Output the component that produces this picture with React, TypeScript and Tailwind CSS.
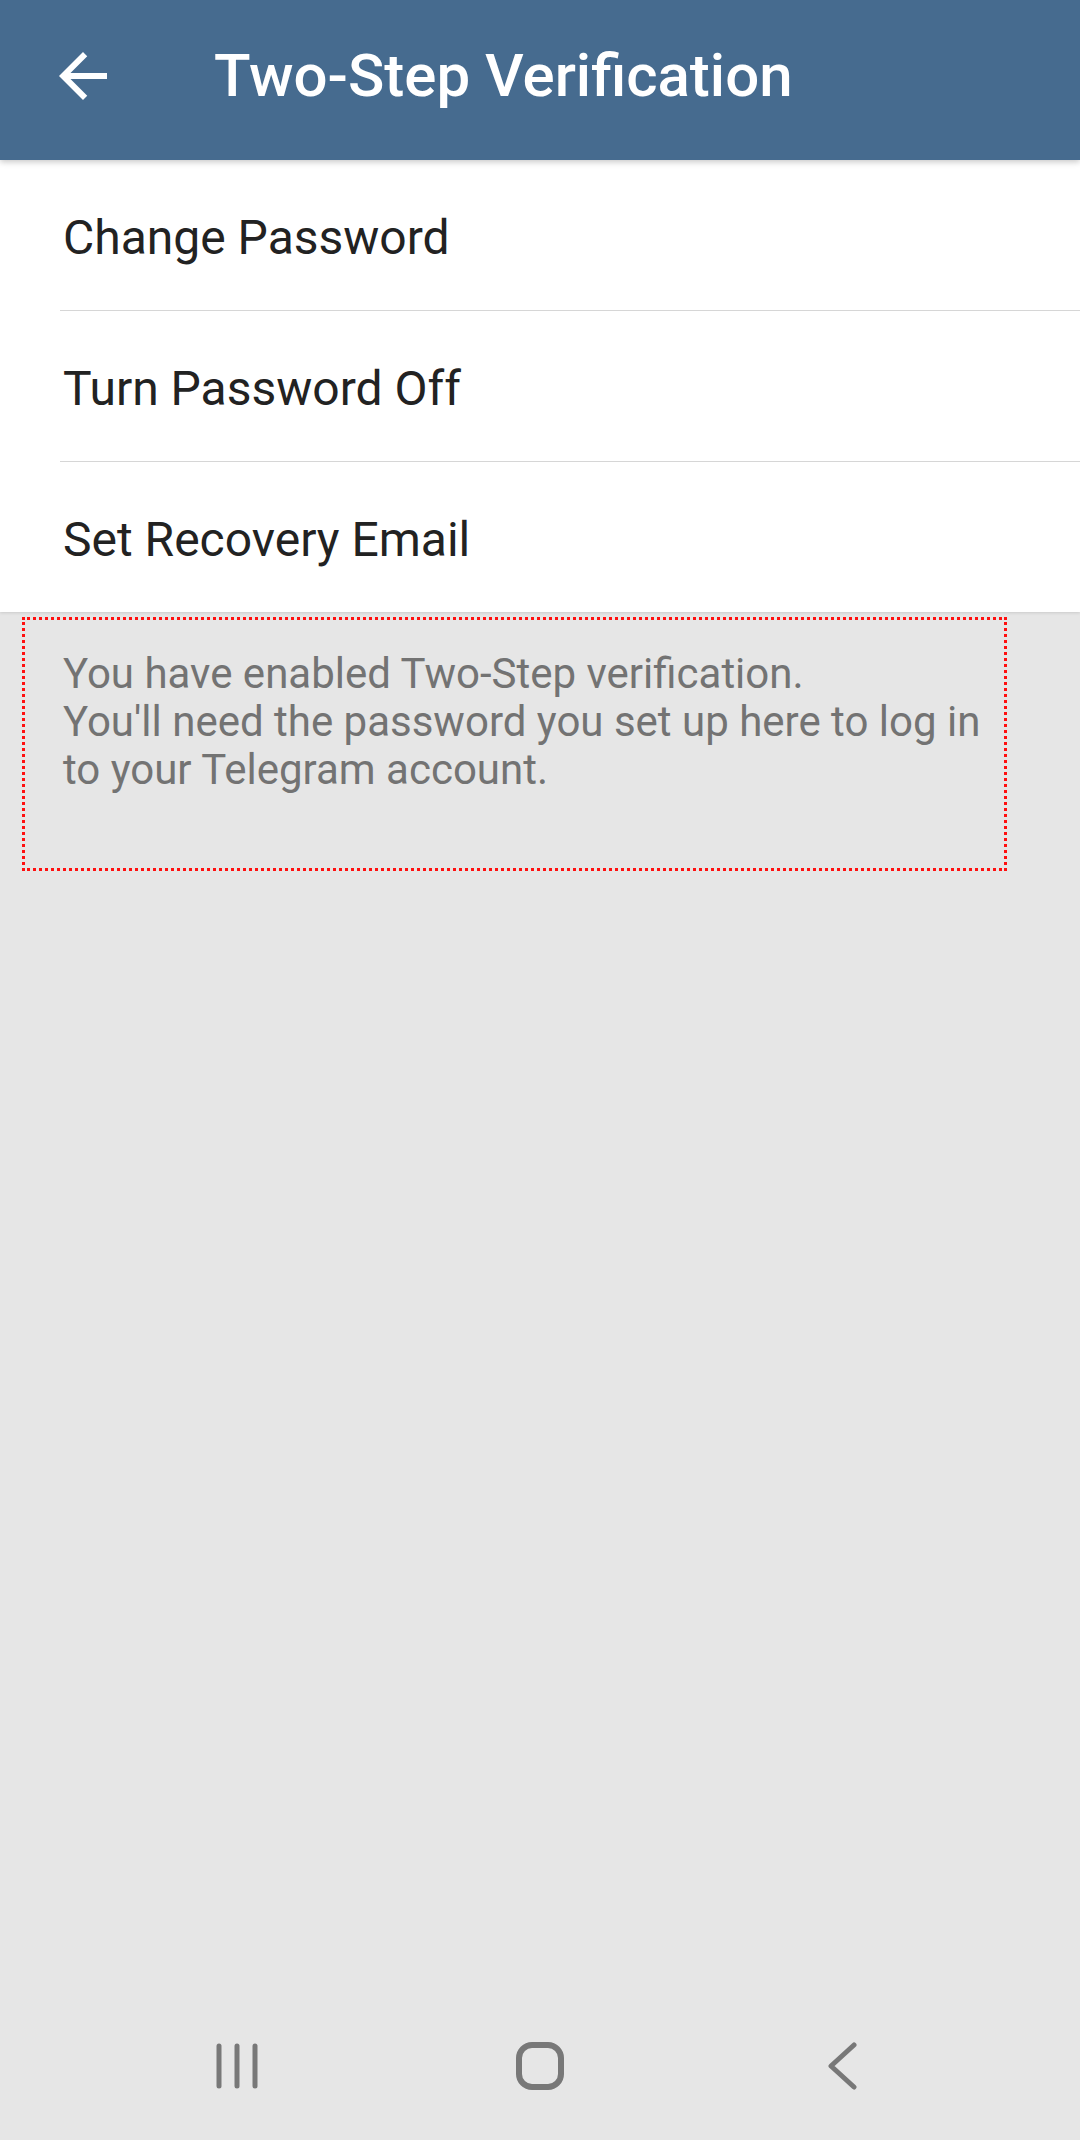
const rows = ["Change Password", "Turn Password Off", "Set Recovery Email"];

function BackArrow() {
  return (
    <svg width="72" height="72" viewBox="0 0 24 24" fill="#ffffff">
      <path d="M20 11H7.83l5.59-5.59L12 4l-8 8 8 8 1.41-1.41L7.83 13H20v-2z" />
    </svg>
  );
}

function NavBar() {
  return (
    <div className="flex h-[148px] items-center justify-center">
      <div className="flex w-[303px] justify-center">
        <svg width="48" height="48" viewBox="0 0 48 48" stroke="#787878" strokeWidth="5" strokeLinecap="round">
          <line x1="6" y1="4" x2="6" y2="44" />
          <line x1="24" y1="4" x2="24" y2="44" />
          <line x1="42" y1="4" x2="42" y2="44" />
        </svg>
      </div>
      <div className="flex w-[303px] justify-center">
        <svg width="48" height="48" viewBox="0 0 48 48" fill="none" stroke="#787878" strokeWidth="6">
          <rect x="3" y="3" width="42" height="42" rx="13" />
        </svg>
      </div>
      <div className="flex w-[303px] justify-center">
        <svg width="30" height="48" viewBox="0 0 30 48" fill="none" stroke="#787878" strokeWidth="5" strokeLinecap="round" strokeLinejoin="round">
          <polyline points="26,3 3,24 26,45" />
        </svg>
      </div>
    </div>
  );
}

export default function App() {
  return (
    <div
      className="flex h-[2140px] w-[1080px] flex-col bg-[#e6e6e6]"
      style={{ fontFamily: "Roboto, 'Noto Sans', sans-serif" }}
    >
      <header className="relative z-10 flex h-[160px] shrink-0 items-center bg-[#466b8f] pb-[8px] shadow-[0_2px_6px_rgba(0,0,0,0.22)]">
        <div className="ml-[47px] flex">
          <BackArrow />
        </div>
        <h1 className="ml-[95px] text-[60px] leading-[60px] font-medium text-white">
          Two-Step Verification
        </h1>
      </header>

      <div className="bg-white shadow-[0_1px_3px_rgba(0,0,0,0.12)]">
        {rows.map((r, i) => (
          <div key={r}>
            <div className="flex h-[150px] items-center pt-[5px] pl-[63px] text-[48px] text-[#222222]">
              {r}
            </div>
            {i < rows.length - 1 && <div className="ml-[60px] h-px bg-[#d6d6d6]" />}
          </div>
        ))}
      </div>

      <div className="mt-[5px] ml-[22px] h-[254px] w-[985px] border-[3px] border-dotted border-[#ff1010] pt-[30px] pl-[38px] pr-[20px]">
        <p className="text-[42px] leading-[48px] text-[#737373]">
          You have enabled Two-Step verification.
          <br />
          You'll need the password you set up here to log in to your Telegram account.
        </p>
      </div>

      <div className="flex-1" />
      <NavBar />
    </div>
  );
}
